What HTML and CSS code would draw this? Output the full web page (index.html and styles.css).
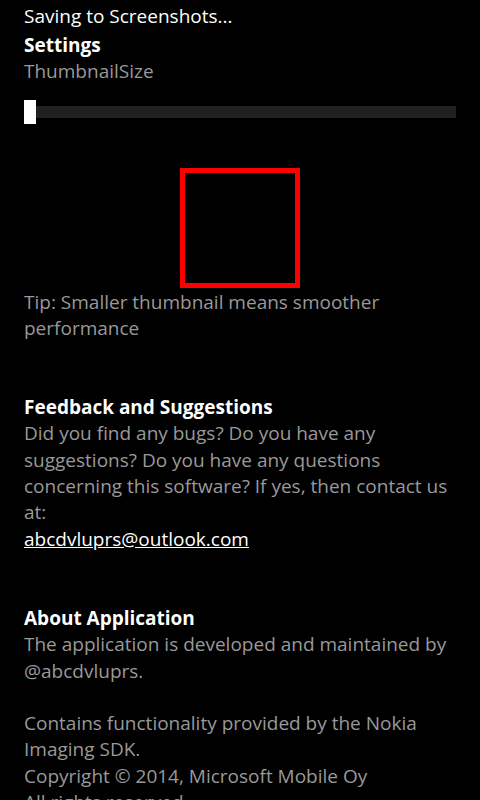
FILE: index.html
```html
<!DOCTYPE html>
<html>
<head>
<meta charset="utf-8">
<link rel="stylesheet" href="styles.css">
</head>
<body>
<div class="page">
  <div class="status">Saving to Screenshots...</div>
  <div class="heading settings">Settings</div>
  <div class="label">ThumbnailSize</div>
  <div class="slider">
    <div class="thumb"></div>
    <div class="track"></div>
  </div>
  <div class="preview-wrap"><div class="preview"></div></div>
  <p class="subtle">Tip: Smaller thumbnail means smoother performance</p>

  <div class="heading section">Feedback and Suggestions</div>
  <p class="subtle">Did you find any bugs? Do you have any suggestions? Do you have any questions concerning this software? If yes, then contact us at:</p>
  <a class="mail" href="#">abcdvluprs@outlook.com</a>

  <div class="heading section">About Application</div>
  <p class="subtle">The application is developed and maintained by @abcdvluprs.</p>
  <p class="subtle gap">Contains functionality provided by the Nokia Imaging SDK.<br>Copyright © 2014, Microsoft Mobile Oy<br>All rights reserved.</p>
</div>
</body>
</html>
```
FILE: styles.css
```css
html, body {
  margin: 0;
  padding: 0;
  background: #000;
  height: 800px;
  overflow: hidden;
}
.page {
  padding: 3px 24px 0 24px;
  font-family: "Open Sans", "Noto Sans", sans-serif;
  font-size: 19px;
  line-height: 26.3px;
  color: #fff;
}
.status {
  line-height: 26px;
}
.heading {
  font-weight: 700;
  color: #fff;
}
.settings {
  margin-top: 3px;
}
.label {
  color: #999;
}
.slider {
  display: flex;
  align-items: center;
  height: 24px;
  margin-top: 15px;
}
.thumb {
  width: 12px;
  height: 24px;
  background: #fff;
  flex: none;
}
.track {
  flex: 1;
  height: 12px;
  background: #212121;
}
.preview-wrap {
  display: flex;
  justify-content: center;
  margin-top: 44px;
}
.preview {
  width: 110px;
  height: 110px;
  border: 5px solid #f00;
}
p {
  margin: 0;
}
.subtle {
  color: #999;
}
.preview-wrap + .subtle {
  margin-top: 1px;
}
.section {
  margin-top: 53px;
}
.mail {
  display: block;
  color: #fff;
  text-decoration: underline;
}
.gap {
  margin-top: 26.3px;
}
```
